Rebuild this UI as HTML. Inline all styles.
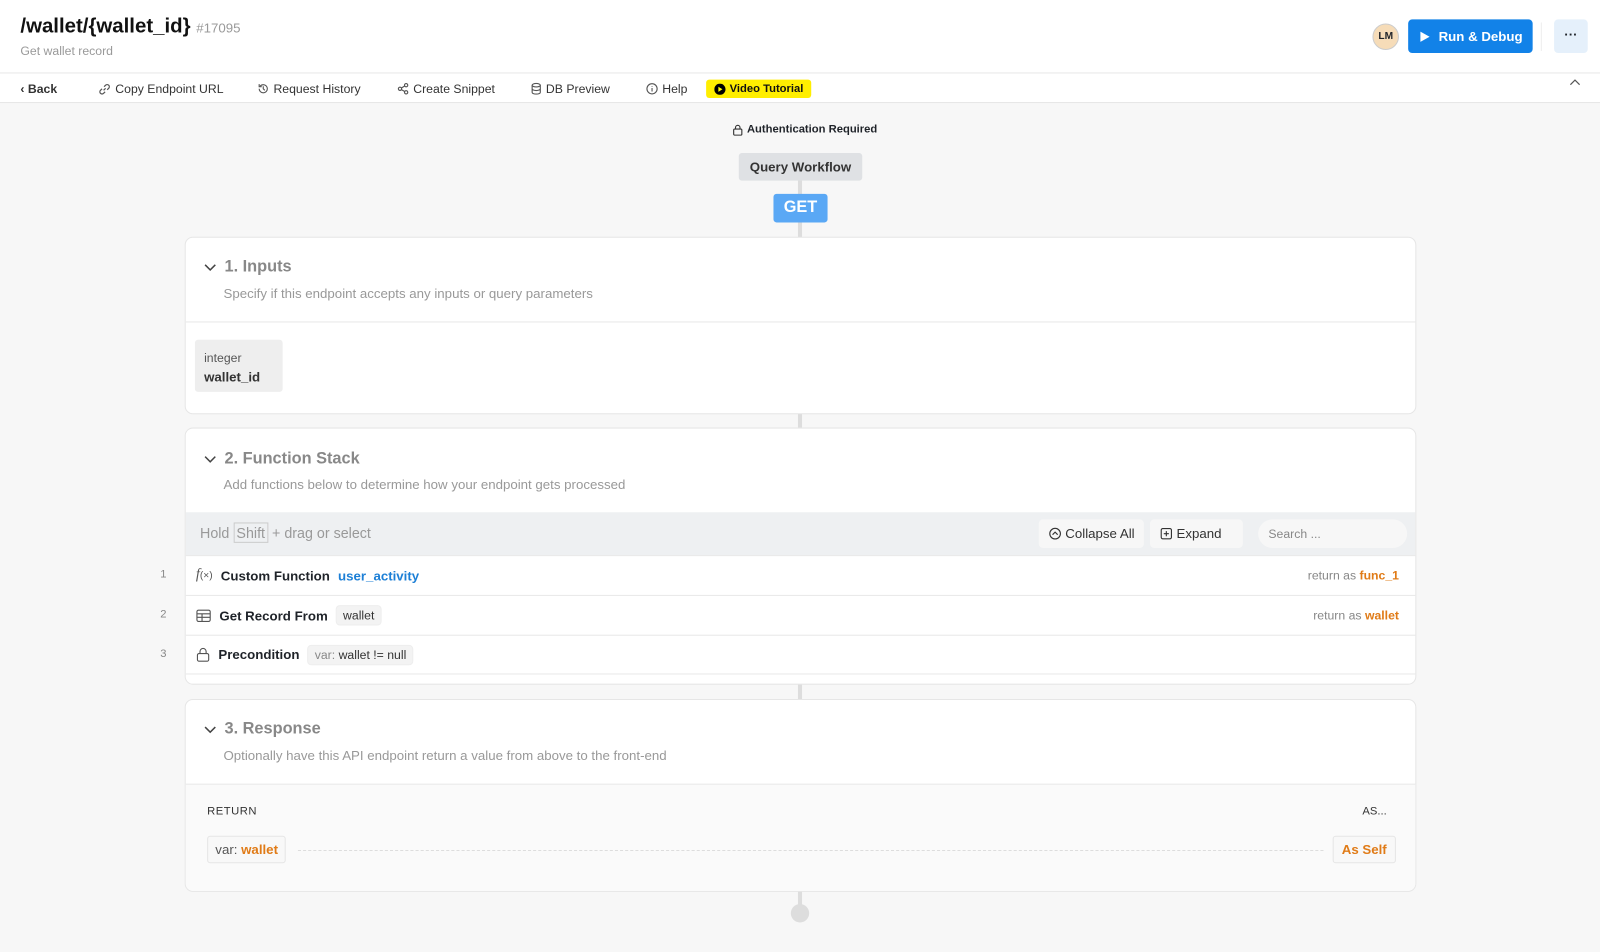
<!DOCTYPE html>
<html><head><meta charset="utf-8"><style>
*{box-sizing:border-box;margin:0;padding:0}
html,body{width:1600px;height:952px;overflow:hidden;background:#f7f7f7}
#w{width:1568px;height:933px;transform:scale(1.020408);transform-origin:0 0;position:relative;font-family:"Liberation Sans",sans-serif;color:#1f2329}
.abs{position:absolute}
.hdr{left:0;top:0;width:1568px;height:72px;background:#fff;border-bottom:1px solid #e8e8e8}
.tb{left:0;top:72px;width:1568px;height:29px;background:#fff;border-bottom:1px solid #e6e6e6;font-size:12px;color:#333}
.tb span{position:absolute;top:8px;display:flex;align-items:center;gap:4px}
.card{position:absolute;left:181px;width:1207px;background:#fff;border:1px solid #e6e6e6;border-radius:8px;overflow:hidden}
.ttl{position:absolute;left:18px;font-size:16px;font-weight:bold;color:#888;display:flex;align-items:center;gap:8px}
.sub{position:absolute;left:37px;font-size:13px;color:#999}
.vline{position:absolute;left:782px;width:4px;background:#ddd}
.row{position:absolute;left:0;width:1207px;height:39px;border-top:1px solid #e8e8e8;font-size:13px;font-weight:bold;display:flex;align-items:center;padding-left:10px;gap:8px}
.num{position:absolute;left:157px;font-size:11px;color:#888}
.chip{background:#f3f3f3;border:1px solid #eee;border-radius:4px;padding:2px 6px;font-weight:normal;font-size:12px;color:#333}
.ret{position:absolute;right:18px;font-weight:normal;font-size:12px;color:#888}
.ret b{color:#e07b17}
</style></head><body><div id="w">
<div class="abs hdr">
 <div class="abs" style="left:20px;top:15px;font-size:20px;font-weight:bold;color:#111">/wallet/{wallet_id} <span style="font-size:13px;font-weight:normal;color:#999">#17095</span></div>
 <div class="abs" style="left:20px;top:43px;font-size:12px;color:#999">Get wallet record</div>
 <div class="abs" style="left:1345px;top:23px;width:26px;height:26px;border-radius:50%;background:#f6dcb8;border:1px solid #ccc;font-size:10px;font-weight:bold;text-align:center;line-height:24px">LM</div>
 <div class="abs" style="left:1380px;top:19px;width:122px;height:33px;border-radius:4px;background:#1282e8;color:#fff;font-size:13px;font-weight:bold;display:flex;align-items:center;justify-content:center;gap:8px"><svg width="12" height="12"><path d="M2 1L11 6L2 11Z" fill="#fff"/></svg>Run &amp; Debug</div>
 <div class="abs" style="left:1510px;top:22px;width:1px;height:28px;background:#eee"></div>
 <div class="abs" style="left:1523px;top:19px;width:33px;height:33px;border-radius:4px;background:#e5f0fb;text-align:center;line-height:30px;font-weight:bold;font-size:13px">···</div>
</div>
<div class="abs tb">
 <span style="left:20px;font-weight:bold">‹ Back</span>
 <span style="left:96px"><svg width="13" height="13" viewBox="0 0 13 13" fill="none" stroke="#555" stroke-width="1.2"><path d="M5.5 7.5l2-2M4 6L2.5 7.5a2 2 0 003 3L7 9M9 7l1.5-1.5a2 2 0 00-3-3L6 4"/></svg>Copy Endpoint URL</span>
 <span style="left:252px"><svg width="12" height="12" viewBox="0 0 12 12" fill="none" stroke="#555" stroke-width="1.1"><path d="M2 6a4 4 0 104-4 4 4 0 00-3 1.4M2 1.5V4h2.5M6 3.5V6l1.5 1.5"/></svg>Request History</span>
 <span style="left:389px"><svg width="12" height="12" viewBox="0 0 12 12" fill="none" stroke="#555" stroke-width="1.1"><circle cx="3" cy="6" r="1.6"/><circle cx="9" cy="2.5" r="1.6"/><circle cx="9" cy="9.5" r="1.6"/><path d="M4.4 5.2l3.2-1.9M4.4 6.8l3.2 1.9"/></svg>Create Snippet</span>
 <span style="left:520px"><svg width="11" height="12" viewBox="0 0 11 12" fill="none" stroke="#555" stroke-width="1.1"><ellipse cx="5.5" cy="2.5" rx="4" ry="1.7"/><path d="M1.5 2.5v7c0 1 1.8 1.7 4 1.7s4-.7 4-1.7v-7M1.5 6c0 1 1.8 1.7 4 1.7S9.5 7 9.5 6"/></svg>DB Preview</span>
 <span style="left:633px"><svg width="12" height="12" viewBox="0 0 12 12" fill="none" stroke="#555" stroke-width="1.1"><circle cx="6" cy="6" r="5"/><path d="M6 5.2v3.5M6 3.3v.6"/></svg>Help</span>
 <span style="left:692px;top:6px;background:#ffee00;border-radius:3px;padding:3px 8px;font-size:11px;font-weight:bold;color:#111"><svg width="11" height="11"><circle cx="5.5" cy="5.5" r="5.5"/><path d="M4 3L8 5.5L4 8Z" fill="#ff0"/></svg> Video Tutorial</span>
 <span style="left:1538px;top:5px;color:#555"><svg width="11" height="8"><path d="M1 6l4.5-4.5L10 6" fill="none" stroke="#555" stroke-width="1.2"/></svg></span>
</div>
<div class="abs" style="left:718px;top:121px;font-size:11px;font-weight:bold;display:flex;align-items:center;gap:4px"><svg width="10" height="11" viewBox="0 0 10 11" fill="none" stroke="#333" stroke-width="1.1"><rect x="1" y="4.5" width="8" height="6" rx="1"/><path d="M2.8 4.5V3a2.2 2.2 0 014.4 0v1.5"/></svg>Authentication Required</div>
<div class="vline" style="top:176px;height:60px"></div>
<div class="abs" style="left:724px;top:150px;width:121px;height:27px;background:#dfe1e4;border-radius:3px;font-size:13px;font-weight:bold;color:#333;text-align:center;line-height:27px">Query Workflow</div>
<div class="abs" style="left:758px;top:190px;width:53px;height:28px;background:#5aa8f5;border-radius:3px;font-size:16px;font-weight:bold;color:#fff;text-align:center;line-height:28px">GET</div>
<div class="vline" style="top:405px;height:15px"></div>
<div class="vline" style="top:670px;height:16px"></div>
<div class="vline" style="top:873px;height:20px"></div>
<div class="abs" style="left:775px;top:886px;width:18px;height:18px;border-radius:50%;background:#ddd"></div>

<div class="card" style="top:232px;height:174px">
 <div class="ttl" style="top:20px"><svg width="12" height="8"><path d="M1 1.5l5 5 5-5" fill="none" stroke="#444" stroke-width="1.5"/></svg>1. Inputs</div>
 <div class="sub" style="top:47px">Specify if this endpoint accepts any inputs or query parameters</div>
 <div class="abs" style="left:0;top:82px;width:1207px;border-top:1px solid #e8e8e8"></div>
 <div class="abs" style="left:9px;top:100px;width:86px;height:51px;background:#eee;border-radius:3px;padding:11px 9px">
  <div style="font-size:12px;color:#555">integer</div><div style="font-size:13px;font-weight:bold;margin-top:4px;color:#333">wallet_id</div></div>
</div>

<div class="card" style="top:419px;height:252px">
 <div class="ttl" style="top:21px"><svg width="12" height="8"><path d="M1 1.5l5 5 5-5" fill="none" stroke="#444" stroke-width="1.5"/></svg>2. Function Stack</div>
 <div class="sub" style="top:47px">Add functions below to determine how your endpoint gets processed</div>
 <div class="abs" style="left:0;top:82px;width:1207px;height:42px;background:#eef0f2;font-size:14px;color:#999">
  <div class="abs" style="left:14px;top:12px">Hold <span style="border:1px solid #ccc;padding:1px 2px">Shift</span> + drag or select</div>
  <div class="abs" style="left:836px;top:7px;width:103px;height:28px;background:#f7f7f7;border-radius:4px;font-size:13px;color:#333;line-height:28px;padding-left:10px;display:flex;align-items:center;gap:4px"><svg width="12" height="12" viewBox="0 0 12 12" fill="none" stroke="#333" stroke-width="1.1"><circle cx="6" cy="6" r="5.2"/><path d="M3.5 7l2.5-2.5L8.5 7"/></svg>Collapse All</div>
  <div class="abs" style="left:945px;top:7px;width:91px;height:28px;background:#f7f7f7;border-radius:4px;font-size:13px;color:#333;line-height:28px;padding-left:10px;display:flex;align-items:center;gap:4px"><svg width="12" height="12" viewBox="0 0 12 12" fill="none" stroke="#333" stroke-width="1.1"><rect x="1" y="1" width="10" height="10" rx="1.5"/><path d="M6 3.5v5M3.5 6h5"/></svg>Expand</div>
  <div class="abs" style="left:1051px;top:7px;width:146px;height:28px;background:#f7f7f7;border-radius:14px;font-size:12px;color:#888;line-height:28px;padding-left:10px">Search ...</div>
 </div>
 <div class="row" style="top:124px"><span style="font-weight:normal;color:#555;font-family:'Liberation Serif',serif;font-style:italic;font-size:14px">f<span style="font-size:10px;font-style:normal;font-family:'Liberation Sans'">(×)</span></span>Custom Function <span style="color:#1c7fd6">user_activity</span><span class="ret">return as <b>func_1</b></span></div>
 <div class="row" style="top:163px"><svg width="15" height="13" viewBox="0 0 15 13" fill="none" stroke="#555" stroke-width="1.1"><rect x="1" y="1" width="13" height="11" rx="1.5"/><path d="M1 4.5h13M1 8h13M6 4.5V12"/></svg>Get Record From <span class="chip">wallet</span><span class="ret">return as <b>wallet</b></span></div>
 <div class="row" style="top:202px;border-bottom:1px solid #e8e8e8"><svg width="14" height="15" viewBox="0 0 14 15" fill="none" stroke="#555" stroke-width="1.1"><rect x="1.5" y="6.5" width="11" height="7.5" rx="1.5"/><path d="M4 6.5V4.5a3 3 0 016 0v2"/></svg>Precondition <span class="chip"><span style="color:#888">var:</span> wallet != null</span></div>
</div>
<div class="num" style="top:557px">1</div><div class="num" style="top:596px">2</div><div class="num" style="top:635px">3</div>

<div class="card" style="top:685px;height:189px">
 <div class="ttl" style="top:20px"><svg width="12" height="8"><path d="M1 1.5l5 5 5-5" fill="none" stroke="#444" stroke-width="1.5"/></svg>3. Response</div>
 <div class="sub" style="top:47px">Optionally have this API endpoint return a value from above to the front-end</div>
 <div class="abs" style="left:0;top:82px;width:1207px;height:107px;background:#fafafa;border-top:1px solid #e8e8e8">
  <div class="abs" style="left:21px;top:20px;font-size:11px;color:#333;letter-spacing:.5px">RETURN</div>
  <div class="abs" style="right:30px;top:20px;font-size:11px;color:#333">AS...</div>
  <div class="abs" style="left:21px;top:50px;height:27px;border:1px solid #e5e5e5;border-radius:3px;background:#f8f8f8;font-size:13px;line-height:25px;padding:0 7px;color:#555">var: <b style="color:#e07b17">wallet</b></div>
  <div class="abs" style="left:110px;top:64px;width:1005px;border-top:1px dashed #ddd"></div>
  <div class="abs" style="right:21px;top:50px;height:27px;border:1px solid #e5e5e5;border-radius:3px;background:#f8f8f8;font-size:13px;line-height:25px;padding:0 8px;color:#e07b17;font-weight:bold">As Self</div>
 </div>
</div>
</div></body></html>
